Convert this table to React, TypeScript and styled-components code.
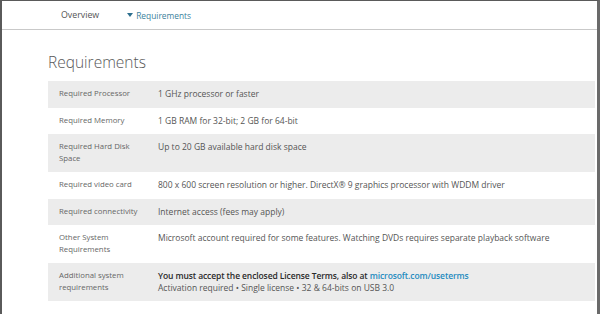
import React from 'react';
import styled, { createGlobalStyle } from 'styled-components';

const GlobalStyle = createGlobalStyle`
  html, body {
    margin: 0;
    padding: 0;
    background: #fff;
  }
  body {
    font-family: 'Open Sans', 'Noto Sans', sans-serif;
  }
`;

const Frame = styled.div`
  box-sizing: border-box;
  width: 600px;
  height: 314px;
  border-top: 1px solid #5a5a5a;
  border-left: 2px solid #5a5a5a;
  border-right: 3px solid #6a6a6a;
  background: #fff;
  overflow: hidden;
`;

const NavBar = styled.nav`
  display: flex;
  align-items: center;
  gap: 28px;
  height: 28px;
  padding-left: 59px;
  border-bottom: 1px solid #c9c9c9;
`;

const NavItem = styled.span<{ active?: boolean }>`
  display: flex;
  align-items: center;
  gap: 3px;
  font-size: ${props => (props.active ? '8.4px' : '8.8px')};
  color: ${props => (props.active ? '#3b7f9c' : '#555')};
`;

const Caret = styled.span`
  width: 0;
  height: 0;
  border-left: 3px solid transparent;
  border-right: 3px solid transparent;
  border-top: 4px solid #2d6f8e;
`;

const Content = styled.main`
  padding: 21px 2px 0 46px;
`;

const Title = styled.h1`
  margin: 0 0 8px;
  font-size: 15.5px;
  font-weight: 300;
  line-height: 22px;
  color: #585858;
`;

const Table = styled.table`
  width: 100%;
  border-collapse: collapse;
`;

const Row = styled.tr<{ shaded: boolean }>`
  background: ${props => (props.shaded ? '#ececec' : '#fff')};
`;

const Label = styled.td`
  width: 80px;
  padding: 7px 19px 8px 11px;
  vertical-align: top;
  font-size: 7.8px;
  line-height: 11.5px;
  color: #666;
`;

const Value = styled.td`
  padding: 7px 0 8px;
  vertical-align: top;
  font-size: 8.5px;
  line-height: 11.5px;
  color: #555;
`;

const Strong = styled.span`
  font-weight: 600;
  letter-spacing: -0.1px;
  color: #2a2a2a;
`;

const Link = styled.a`
  color: #1f8bbf;
  text-decoration: none;
`;

const rows: { label: string; value: React.ReactNode }[] = [
  { label: 'Required Processor', value: '1 GHz processor or faster' },
  { label: 'Required Memory', value: '1 GB RAM for 32-bit; 2 GB for 64-bit' },
  { label: 'Required Hard Disk Space', value: 'Up to 20 GB available hard disk space' },
  {
    label: 'Required video card',
    value: '800 x 600 screen resolution or higher. DirectX® 9 graphics processor with WDDM driver',
  },
  { label: 'Required connectivity', value: 'Internet access (fees may apply)' },
  {
    label: 'Other System Requirements',
    value: 'Microsoft account required for some features. Watching DVDs requires separate playback software',
  },
  {
    label: 'Additional system requirements',
    value: (
      <>
        <Strong>
          You must accept the enclosed License Terms, also at <Link>microsoft.com/useterms</Link>
        </Strong>
        <br />
        Activation required • Single license • 32 &amp; 64-bits on USB 3.0
      </>
    ),
  },
];

export default function App() {
  return (
    <Frame>
      <GlobalStyle />
      <NavBar>
        <NavItem>Overview</NavItem>
        <NavItem active>
          <Caret />
          Requirements
        </NavItem>
      </NavBar>
      <Content>
        <Title>Requirements</Title>
        <Table>
          <tbody>
            {rows.map((row, i) => (
              <Row key={row.label} shaded={i % 2 === 0}>
                <Label>{row.label}</Label>
                <Value>{row.value}</Value>
              </Row>
            ))}
          </tbody>
        </Table>
      </Content>
    </Frame>
  );
}
